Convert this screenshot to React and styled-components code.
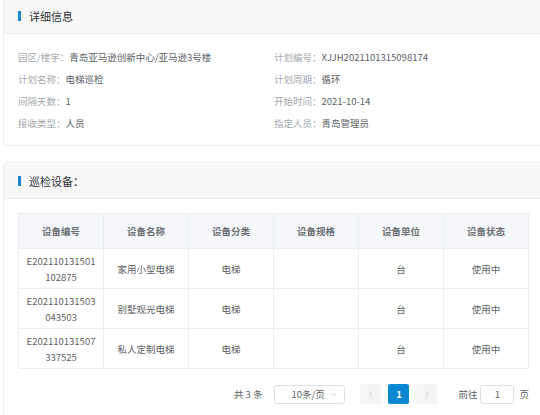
import React from "react";
import styled, { createGlobalStyle } from "styled-components";

const GlobalStyle = createGlobalStyle`
    body {
        margin: 0;
        background: #fff;
        overflow: hidden;
        font-family: "Noto Sans CJK SC", "Noto Sans", sans-serif;
        font-size: 9.5px;
        color: #606266;
    }
`;

const info = [
    ["园区/楼宇：", "青岛亚马逊创新中心/亚马逊3号楼", "计划编号：", "XJJH2021101315098174"],
    ["计划名称：", "电梯巡检", "计划周期：", "循环"],
    ["间隔天数：", "1", "开始时间：", "2021-10-14"],
    ["接收类型：", "人员", "指定人员：", "青岛管理员"],
];

const columns = ["设备编号", "设备名称", "设备分类", "设备规格", "设备单位", "设备状态"];

const devices = [
    { code: "E202110131501102875", name: "家用小型电梯", type: "电梯", spec: "", unit: "台", status: "使用中" },
    { code: "E202110131503043503", name: "别墅观光电梯", type: "电梯", spec: "", unit: "台", status: "使用中" },
    { code: "E202110131507337525", name: "私人定制电梯", type: "电梯", spec: "", unit: "台", status: "使用中" },
];

function App() {
    return (
        <>
            <GlobalStyle />
            <Page>
                <Card $first>
                    <CardHeader>
                        <Bar />
                        <Title>详细信息</Title>
                    </CardHeader>
                    <InfoBody>
                        {info.map((row) => (
                            <InfoRow key={row[0]}>
                                <InfoCell>
                                    <Label>{row[0]}</Label>
                                    <Value>{row[1]}</Value>
                                </InfoCell>
                                <InfoCell>
                                    <Label>{row[2]}</Label>
                                    <Value>{row[3]}</Value>
                                </InfoCell>
                            </InfoRow>
                        ))}
                    </InfoBody>
                </Card>
                <Card>
                    <CardHeader>
                        <Bar />
                        <Title>巡检设备：</Title>
                    </CardHeader>
                    <TableBody>
                        <Table>
                            <thead>
                                <tr>
                                    {columns.map((c) => (
                                        <Th key={c}>{c}</Th>
                                    ))}
                                </tr>
                            </thead>
                            <tbody>
                                {devices.map((d) => (
                                    <tr key={d.code}>
                                        <Td>{d.code}</Td>
                                        <Td>{d.name}</Td>
                                        <Td>{d.type}</Td>
                                        <Td>{d.spec}</Td>
                                        <Td>{d.unit}</Td>
                                        <Td>{d.status}</Td>
                                    </tr>
                                ))}
                            </tbody>
                        </Table>
                        <Pager>
                            <Total>共 3 条</Total>
                            <SizeSelect>
                                <span>10条/页</span>
                                <svg width="8" height="8" viewBox="0 0 8 8">
                                    <path d="M1.5 3 L4 5.5 L6.5 3" fill="none" stroke="#c0c4cc" strokeWidth="0.8" />
                                </svg>
                            </SizeSelect>
                            <Pages>
                                <PageBtn>
                                    <svg width="8" height="8" viewBox="0 0 8 8">
                                        <path d="M5 1.5 L2.5 4 L5 6.5" fill="none" stroke="#c0c4cc" strokeWidth="0.9" />
                                    </svg>
                                </PageBtn>
                                <PageBtn $active>1</PageBtn>
                                <PageBtn>
                                    <svg width="8" height="8" viewBox="0 0 8 8">
                                        <path d="M3 1.5 L5.5 4 L3 6.5" fill="none" stroke="#c0c4cc" strokeWidth="0.9" />
                                    </svg>
                                </PageBtn>
                            </Pages>
                            <Jump>
                                前往
                                <JumpInput>1</JumpInput>
                                页
                            </Jump>
                        </Pager>
                    </TableBody>
                </Card>
            </Page>
        </>
    );
}

const Page = styled.div`
    padding-left: 3px;
    width: 560px;
`;
const Card = styled.div`
    border: 1px solid #ebeef5;
    border-radius: 4px;
    background: #fff;
    margin-top: ${(p) => (p.$first ? "-3px" : "16px")};
`;
const CardHeader = styled.div`
    height: 35px;
    display: flex;
    align-items: center;
    padding-left: 14px;
    background: #f8f8f9;
    border-bottom: 1px solid #ebeef5;
`;
const Bar = styled.span`
    width: 3px;
    height: 10px;
    background: #1a86d0;
    margin-right: 8px;
`;
const Title = styled.span`
    font-size: 11px;
    color: #303133;
`;
const InfoBody = styled.div`
    padding: 12px 14px 11px;
`;
const InfoRow = styled.div`
    display: grid;
    grid-template-columns: 256px 1fr;
    height: 22px;
    align-items: center;
`;
const InfoCell = styled.div`
    display: flex;
    white-space: nowrap;
`;
const Label = styled.span`
    color: #a6a9ad;
`;
const Value = styled.span`
    color: #5c6066;
`;
const TableBody = styled.div`
    padding: 14px 14px 20px;
`;
const Table = styled.table`
    width: 511px;
    border-collapse: collapse;
    table-layout: fixed;
`;
const Th = styled.th`
    height: 34px;
    background: #f5f7fa;
    border: 1px solid #ebeef5;
    color: #6b6e73;
    font-weight: 600;
    font-size: 9.5px;
    padding: 0;
`;
const Td = styled.td`
    height: 39px;
    border: 1px solid #ebeef5;
    text-align: center;
    color: #606266;
    line-height: 16px;
    padding: 0 5px;
    word-break: break-all;
`;
const Pager = styled.div`
    width: 511px;
    display: flex;
    justify-content: flex-end;
    align-items: center;
    margin-top: 15px;
    height: 20px;
`;
const Total = styled.span`
    color: #606266;
    margin-right: 12px;
`;
const SizeSelect = styled.div`
    width: 71px;
    height: 19px;
    box-sizing: border-box;
    border: 1px solid #dcdfe6;
    border-radius: 3px;
    display: flex;
    align-items: center;
    justify-content: space-between;
    padding: 0 6px 0 16px;
    color: #606266;
    margin-right: 15px;
`;
const Pages = styled.div`
    display: flex;
    gap: 7px;
    margin-right: 21px;
`;
const PageBtn = styled.div`
    width: 21px;
    height: 20px;
    border-radius: 2px;
    display: flex;
    align-items: center;
    justify-content: center;
    background: ${(p) => (p.$active ? "#0a87d1" : "#f4f4f5")};
    color: ${(p) => (p.$active ? "#fff" : "#c0c4cc")};
    font-weight: 700;
`;
const Jump = styled.div`
    display: flex;
    align-items: center;
    color: #606266;
    gap: 3px;
`;
const JumpInput = styled.div`
    width: 34px;
    height: 19px;
    box-sizing: border-box;
    border: 1px solid #dcdfe6;
    border-radius: 3px;
    display: flex;
    align-items: center;
    justify-content: center;
    margin-right: 2px;
`;

export default App;
